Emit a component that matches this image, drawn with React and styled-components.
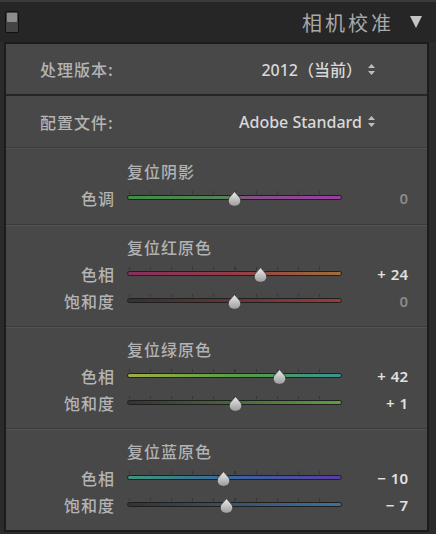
import React from 'react';
import styled, { createGlobalStyle } from 'styled-components';

const GlobalStyle = createGlobalStyle`
  html, body {
    margin: 0;
    padding: 0;
    background: #2b2b2b;
  }
  body {
    font-family: 'Noto Sans', 'Noto Sans CJK SC', sans-serif;
  }
`;

// Styled components for the panel
const Frame = styled.div`
  width: 436px;
  height: 534px;
  box-sizing: border-box;
  background: #2b2b2b;
  border-top: 2px solid #3a3a3a;
  overflow: hidden;
`;

const Header = styled.div`
  height: 40px;
  display: flex;
  align-items: center;
  padding: 0 14px 0 5px;
  background: #262626;
`;

const ToggleIcon = styled.div`
  width: 10px;
  height: 18px;
  border: 1px solid #111;
  border-radius: 2px;
  background: #444;
  display: flex;
  flex-direction: column;
  padding: 1px;
  box-sizing: content-box;
  &::before {
    content: '';
    height: 9px;
    background: #8c8c8c;
    border-radius: 1px;
  }
`;

const Title = styled.div`
  margin-left: auto;
  font-family: 'Noto Sans CJK SC', sans-serif;
  font-size: 20px;
  letter-spacing: 3px;
  color: #a9a9a9;
`;

const Collapse = styled.div`
  margin-left: 16px;
  width: 0;
  height: 0;
  border-left: 6px solid transparent;
  border-right: 6px solid transparent;
  border-top: 12px solid #c4c4c4;
`;

const Panel = styled.div`
  margin: 0 7px 0 4px;
  border: 2px solid #1c1c1c;
  background: #484848;
`;

const SelectRow = styled.div`
  height: ${p => p.$h}px;
  display: flex;
  align-items: center;
  justify-content: space-between;
  padding: 0 52px 0 34px;
  border-bottom: ${p => (p.$heavy ? '2px solid #262626' : '1px solid #3b3b3b')};
  box-shadow: ${p => (p.$heavy ? 'none' : '0 1px 0 #515151')};
`;

const RowLabel = styled.div`
  font-family: 'Noto Sans CJK SC', sans-serif;
  font-size: 16px;
  font-weight: 500;
  color: #b4b4b4;
  letter-spacing: 1px;
`;

const SelectValue = styled.div`
  display: flex;
  align-items: center;
  gap: 6px;
  font-size: 16px;
  font-weight: 500;
  color: #d8d8d8;
`;

const Section = styled.div`
  padding: ${p => (p.$first ? '9px 19px 13px 0' : '8px 19px 12px 0')};
  border-top: ${p => (p.$first ? 'none' : '1px solid #3b3b3b')};
  box-shadow: ${p => (p.$first ? 'none' : 'inset 0 1px 0 #525252')};
  display: grid;
  grid-template-columns: 109px 215px 1fr;
  column-gap: 12px;
  grid-auto-rows: 27px;
  align-items: center;
`;

const SectionTitle = styled.div`
  grid-column: 2 / 4;
  font-family: 'Noto Sans CJK SC', sans-serif;
  font-size: 16px;
  font-weight: 500;
  letter-spacing: 1px;
  color: #b2b2b2;
`;

const SliderLabel = styled.div`
  text-align: right;
  font-family: 'Noto Sans CJK SC', sans-serif;
  font-size: 16px;
  font-weight: 500;
  letter-spacing: 1px;
  color: #b4b4b4;
`;

const TrackWrap = styled.div`
  position: relative;
  height: 16px;
  display: flex;
  align-items: center;
`;

const Ticks = styled.div`
  position: absolute;
  left: 2px;
  right: 2px;
  top: 1px;
  height: 3px;
  background: repeating-linear-gradient(
    90deg,
    #363636 0 1px,
    transparent 1px 21.1px
  );
`;

const Track = styled.div`
  flex: 1;
  height: 3px;
  border: 1px solid #1f1f1f;
  border-radius: 3px;
  background: ${p => p.$bg};
`;

const Thumb = styled.svg`
  position: absolute;
  top: 1px;
  width: 15px;
  height: 16px;
  margin-left: -7.5px;
`;

const Value = styled.div`
  text-align: right;
  font-size: 15px;
  font-weight: 600;
  color: ${p => (p.$zero ? '#8a8a8a' : '#e2e2e2')};
  word-spacing: 1px;
`;

const UpDown = () => (
  <svg width="7" height="11" viewBox="0 0 7 11">
    <path d="M3.5 0 L7 4 L0 4 Z" fill="#bdbdbd" />
    <path d="M3.5 11 L7 7 L0 7 Z" fill="#bdbdbd" />
  </svg>
);

const Slider = ({ label, value, bg }) => {
  const pos = 50 + value / 2;
  const text = value === 0 ? '0' : value > 0 ? `+ ${value}` : `− ${Math.abs(value)}`;
  return (
    <>
      <SliderLabel>{label}</SliderLabel>
      <TrackWrap>
        <Ticks />
        <Track $bg={bg} />
        <Thumb viewBox="0 0 15 16" style={{ left: `${pos}%` }}>
          <defs>
            <linearGradient id="thumbFill" x1="0" y1="0" x2="0" y2="1">
              <stop offset="0" stopColor="#ececec" />
              <stop offset="1" stopColor="#9a9a9a" />
            </linearGradient>
          </defs>
          <path
            d="M7.5 0.6 L13.2 7 Q14.8 10.4 12.6 13.4 Q10.4 15.4 7.5 15.4 Q4.6 15.4 2.4 13.4 Q0.2 10.4 1.8 7 Z"
            fill="url(#thumbFill)"
            stroke="#383838"
            strokeWidth="0.9"
          />
        </Thumb>
      </TrackWrap>
      <Value $zero={value === 0}>{text}</Value>
    </>
  );
};

const sections = [
  {
    title: '复位阴影',
    rows: [
      { label: '色调', value: 0, bg: 'linear-gradient(90deg, #3c9044, #5a805a 48%, #815384 55%, #9c3ca4)' },
    ],
  },
  {
    title: '复位红原色',
    rows: [
      { label: '色相', value: 24, bg: 'linear-gradient(90deg, #872f5c, #933c46 50%, #a06d3c)' },
      { label: '饱和度', value: 0, bg: 'linear-gradient(90deg, #333333, #663434 50%, #9e3a3a)' },
    ],
  },
  {
    title: '复位绿原色',
    rows: [
      { label: '色相', value: 42, bg: 'linear-gradient(90deg, #a0ad42, #549b48 55%, #3a9496)' },
      { label: '饱和度', value: 1, bg: 'linear-gradient(90deg, #333333, #466a38 50%, #5e9e42)' },
    ],
  },
  {
    title: '复位蓝原色',
    rows: [
      { label: '色相', value: -10, bg: 'linear-gradient(90deg, #3a987c, #3a64a0 50%, #5a3ca2)' },
      { label: '饱和度', value: -7, bg: 'linear-gradient(90deg, #333333, #3a526e 50%, #3c729e)' },
    ],
  },
];

const App = () => (
  <>
    <GlobalStyle />
    <Frame>
      <Header>
        <ToggleIcon />
        <Title>相机校准</Title>
        <Collapse />
      </Header>
      <Panel>
        <SelectRow $h={50} $heavy>
          <RowLabel>处理版本:</RowLabel>
          <SelectValue>
            2012（当前）
            <UpDown />
          </SelectValue>
        </SelectRow>
        <SelectRow $h={51}>
          <RowLabel>配置文件:</RowLabel>
          <SelectValue>
            Adobe Standard
            <UpDown />
          </SelectValue>
        </SelectRow>
        {sections.map((s, i) => (
          <Section key={s.title} $first={i === 0}>
            <SectionTitle>{s.title}</SectionTitle>
            {s.rows.map(r => (
              <Slider key={r.label} {...r} />
            ))}
          </Section>
        ))}
      </Panel>
    </Frame>
  </>
);

export default App;
